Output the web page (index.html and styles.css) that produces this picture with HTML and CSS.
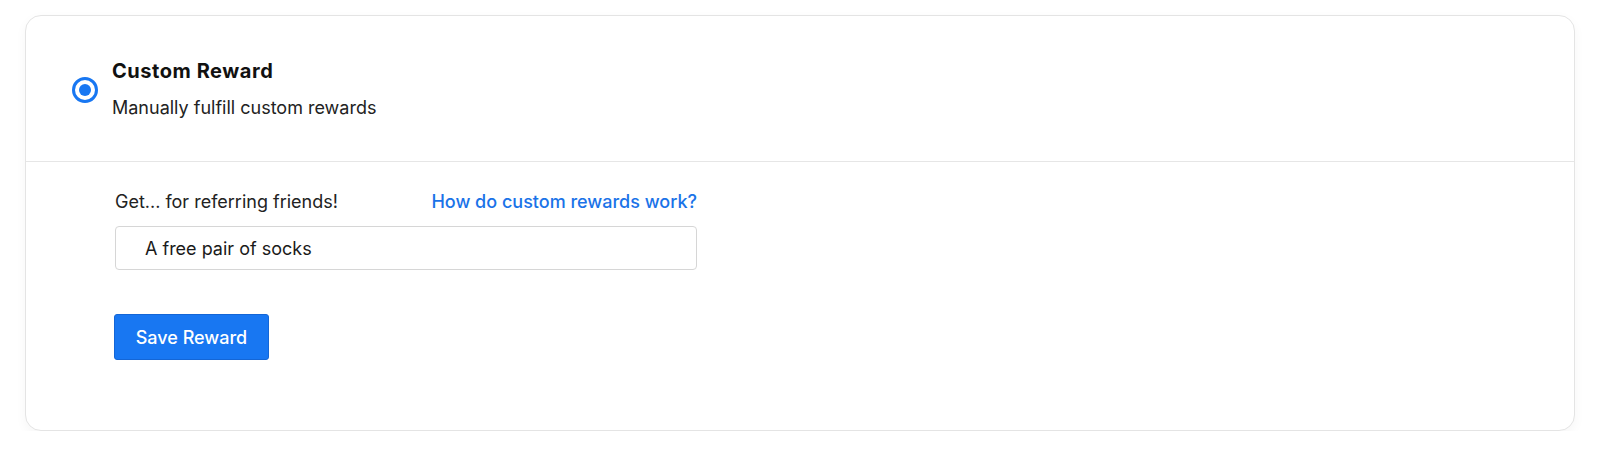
FILE: index.html
```html
<!DOCTYPE html>
<html>
<head>
<meta charset="utf-8">
<link rel="stylesheet" href="styles.css">
</head>
<body>
<div class="page">
  <div class="card">
    <div class="card-head">
      <span class="radio"><span class="radio-dot"></span></span>
      <div class="head-text">
        <div class="title">Custom Reward</div>
        <div class="subtitle">Manually fulfill custom rewards</div>
      </div>
    </div>
    <div class="card-body">
      <div class="field">
        <div class="field-row">
          <label class="label">Get... for referring friends!</label>
          <a class="link" href="#">How do custom rewards work?</a>
        </div>
        <div class="input">A free pair of socks</div>
      </div>
      <button class="btn">Save Reward</button>
    </div>
  </div>
</div>
</body>
</html>
```
FILE: styles.css
```css
* { box-sizing: border-box; }
html, body { margin: 0; padding: 0; background: #ffffff; }
body { font-family: Inter, "Noto Sans", sans-serif; color: #1a1a1a; }
.page { padding: 15px 25px 0 25px; }
.card {
  width: 1550px;
  height: 416px;
  border: 1px solid #e4e4e4;
  border-radius: 16px;
  background: #fff;
  box-shadow: 0 4px 12px rgba(0,0,0,0.04);
}
.card-head {
  display: flex;
  align-items: center;
  gap: 14px;
  height: 146px;
  padding: 0 0 0 46px;
  border-bottom: 1px solid #e6e6e6;
}
.radio {
  width: 26px; height: 26px;
  margin-top: 2px;
  border: 3px solid #1877f2;
  border-radius: 50%;
  display: flex; align-items: center; justify-content: center;
  flex: none;
}
.radio-dot { width: 12px; height: 12px; border-radius: 50%; background: #1877f2; }
.head-text { display: flex; flex-direction: column; gap: 14px; }
.title { font-size: 20px; line-height: 24px; font-weight: 700; color: #111; letter-spacing: 0.55px; }
.subtitle { font-size: 18px; line-height: 22px; color: #222; }
.card-body { padding: 29px 0 0 89px; display: flex; flex-direction: column; align-items: flex-start; }
.field { width: 582px; }
.field-row { display: flex; justify-content: space-between; align-items: center; font-size: 18px; line-height: 22px; }
.label { color: #222; }
.link { color: #1a73e8; text-decoration: none; font-weight: 500; }
.input {
  margin-top: 13px;
  height: 44px;
  border: 1px solid #d6d6d6;
  border-radius: 4px;
  padding: 0 0 0 29px;
  display: flex; align-items: center;
  font-size: 18px; color: #1a1a1a;
}
.btn {
  margin-top: 44px;
  margin-left: -1px;
  width: 155px; height: 46px;
  background: #1877f2;
  color: #fff;
  border: 1px solid #1466d6;
  border-radius: 3px;
  font-family: Inter, "Noto Sans", sans-serif;
  font-size: 18px; font-weight: 500;
}
```
